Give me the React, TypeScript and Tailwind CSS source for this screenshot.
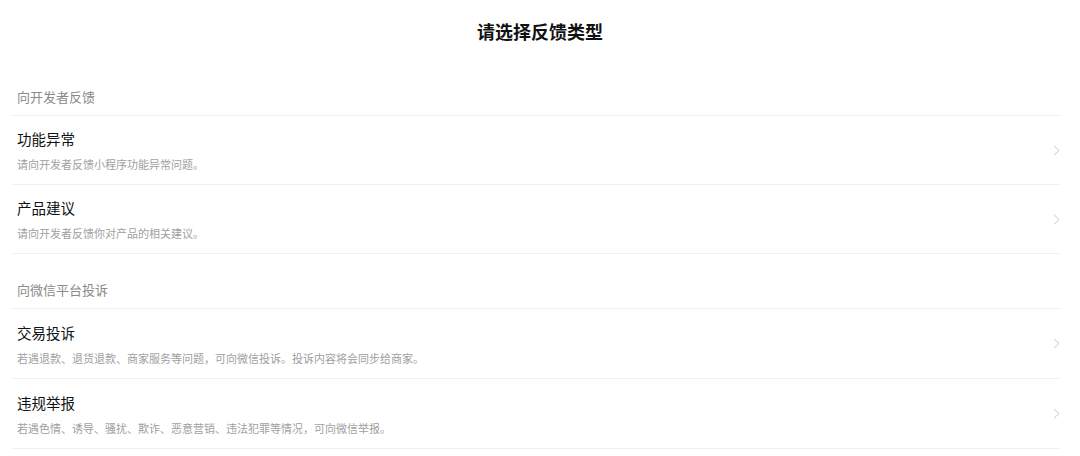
interface FeedbackItem {
  title: string;
  desc: string;
}

interface FeedbackGroup {
  label: string;
  items: FeedbackItem[];
}

const groups: FeedbackGroup[] = [
  {
    label: "向开发者反馈",
    items: [
      { title: "功能异常", desc: "请向开发者反馈小程序功能异常问题。" },
      { title: "产品建议", desc: "请向开发者反馈你对产品的相关建议。" },
    ],
  },
  {
    label: "向微信平台投诉",
    items: [
      {
        title: "交易投诉",
        desc: "若遇退款、退货退款、商家服务等问题，可向微信投诉。投诉内容将会同步给商家。",
      },
      {
        title: "违规举报",
        desc: "若遇色情、诱导、骚扰、欺诈、恶意营销、违法犯罪等情况，可向微信举报。",
      },
    ],
  },
];

function Arrow() {
  return (
    <svg width="7" height="11" viewBox="0 0 7 11" fill="none" className="shrink-0">
      <polyline points="1,0.8 6,5.5 1,10.2" stroke="#c7c7c7" strokeWidth="1" />
    </svg>
  );
}

export default function App() {
  return (
    <div
      className="min-h-screen w-full bg-white"
      style={{ fontFamily: '"Noto Sans CJK SC", "Noto Sans", sans-serif' }}
    >
      <div className="flex h-[62px] items-center justify-center">
        <h1 className="text-[18px] font-bold leading-6 text-[#111]">请选择反馈类型</h1>
      </div>

      <div className="ml-3 mr-5">
        {groups.map((group, gi) => (
          <div key={group.label}>
            <div
              className={`flex items-end border-b border-[#f0f0f0] pl-[5px] ${
                gi === 0 ? "h-[54px] pb-[10px]" : "h-[55px] pb-[10px]"
              }`}
            >
              <span className="text-[13px] leading-4 text-[#8a8a8a]">{group.label}</span>
            </div>
            {group.items.map((item) => (
              <div
                key={item.title}
                className={`flex items-center border-b border-[#f0f0f0] pl-[5px] ${
                  gi === 0 ? "h-[69px]" : "h-[70px]"
                }`}
              >
                <div className="flex-1 pt-[1px]">
                  <p className="text-[14.5px] leading-5 text-[#111]">{item.title}</p>
                  <p className="mt-[7px] text-[11px] leading-4 text-[#a0a0a0]">{item.desc}</p>
                </div>
                <Arrow />
              </div>
            ))}
          </div>
        ))}
      </div>
    </div>
  );
}
